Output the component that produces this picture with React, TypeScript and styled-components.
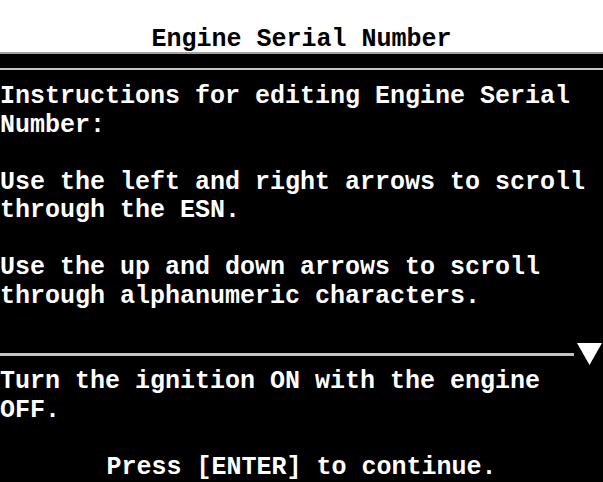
import React from "react";
import styled, { createGlobalStyle } from "styled-components";

const GlobalStyle = createGlobalStyle`
  html, body {
    margin: 0;
    padding: 0;
    background: #000;
  }
`;

const paragraphs = [
  ["Instructions for editing Engine Serial", "Number:"],
  ["Use the left and right arrows to scroll", "through the ESN."],
  ["Use the up and down arrows to scroll", "through alphanumeric characters."]
];

export default function App() {
  return (
    <>
      <GlobalStyle />
      <Screen>
        <TitleBar>Engine Serial Number</TitleBar>
        <TopRule />
        <Instructions>
          {paragraphs.map((lines, i) => (
            <Paragraph key={i}>
              {lines.map((line, j) => (
                <Line key={j}>{line}</Line>
              ))}
            </Paragraph>
          ))}
        </Instructions>
        <ScrollRow>
          <Rule />
          <ScrollArrow viewBox="0 0 25 22">
            <polygon points="0,0 25,0 12.5,22" fill="#fff" />
          </ScrollArrow>
        </ScrollRow>
        <Footer>
          <Paragraph>
            <Line>Turn the ignition ON with the engine</Line>
            <Line>OFF.</Line>
          </Paragraph>
          <Prompt>Press [ENTER] to continue.</Prompt>
        </Footer>
      </Screen>
    </>
  );
}

const Screen = styled.div`
  width: 603px;
  height: 482px;
  overflow: hidden;
  background: #000;
  color: #fff;
  font-family: "Liberation Mono", "DejaVu Sans Mono", monospace;
  font-weight: bold;
  font-size: 25px;
  line-height: 28.5px;
  display: flex;
  flex-direction: column;
`;

// white header band with its grey bottom edge
const TitleBar = styled.div`
  height: 54px;
  box-sizing: border-box;
  padding-top: 26px;
  background: #fff;
  color: #000;
  text-align: center;
  white-space: pre;
  border-bottom: 2px solid #a0a0a0;
`;

const TopRule = styled.div`
  height: 2px;
  margin-top: 14px;
  background: #c4c4c4;
`;

const Instructions = styled.div`
  margin-top: 13px;
  display: flex;
  flex-direction: column;
  gap: 28.5px;
`;

const Paragraph = styled.div`
  display: flex;
  flex-direction: column;
`;

const Line = styled.div`
  white-space: pre;
`;

const ScrollRow = styled.div`
  margin-top: 32px;
  height: 22px;
  display: flex;
  align-items: center;
  gap: 3px;
  padding-right: 1px;
`;

const Rule = styled.div`
  flex: 1;
  height: 3px;
  background: #c4c4c4;
`;

const ScrollArrow = styled.svg`
  width: 25px;
  height: 22px;
  display: block;
`;

const Footer = styled.div`
  margin-top: 3px;
  display: flex;
  flex-direction: column;
  gap: 28.5px;
`;

const Prompt = styled.div`
  text-align: center;
  white-space: pre;
`;
